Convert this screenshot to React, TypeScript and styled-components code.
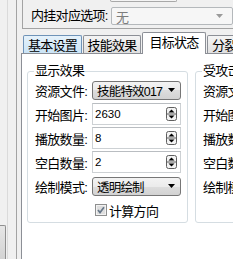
import styled, { createGlobalStyle } from "styled-components";

const FONT = `"Liberation Sans", "Noto Sans CJK SC", sans-serif`;

const GlobalStyle = createGlobalStyle`
  html, body {
    margin: 0;
    padding: 0;
    background: #f0f0f0;
  }
  body {
    font-family: ${FONT};
    font-size: 13px;
    color: #000;
  }
`;

type Field = { label: string; kind: "combo" | "spin"; value: string };

const DISPLAY_FIELDS: Field[] = [
  { label: "资源文件:", kind: "combo", value: "技能特效017" },
  { label: "开始图片:", kind: "spin", value: "2630" },
  { label: "播放数量:", kind: "spin", value: "8" },
  { label: "空白数量:", kind: "spin", value: "2" },
  { label: "绘制模式:", kind: "combo", value: "透明绘制" },
];

const HIT_FIELDS: Field[] = [
  { label: "资源文件:", kind: "combo", value: "技能特效018" },
  { label: "开始图片:", kind: "spin", value: "0" },
  { label: "播放数量:", kind: "spin", value: "0" },
  { label: "空白数量:", kind: "spin", value: "0" },
  { label: "绘制模式:", kind: "combo", value: "透明绘制" },
];

type TabKind = "hover" | "normal" | "active";

const TABS: { title: string; kind: TabKind; width: number }[] = [
  { title: "基本设置", kind: "hover", width: 59 },
  { title: "技能效果", kind: "normal", width: 58 },
  { title: "目标状态", kind: "active", width: 64 },
  { title: "分裂效果", kind: "normal", width: 59 },
];

const Screen = styled.div`
  display: flex;
  width: 233px;
  height: 259px;
  overflow: hidden;
  background: #f0f0f0;
`;

const Gutter = styled.div`
  flex: none;
  display: flex;
  width: 16px;
  border-right: 1px solid #a3a3a3;
`;

const OuterStrip = styled.div`
  flex: none;
  display: flex;
  flex-direction: column;
  justify-content: flex-end;
  width: 7px;
  border-right: 1px solid #dadada;
`;

const ClippedButton = styled.div`
  width: 5px;
  height: 33px;
  background: linear-gradient(#e6e6e6, #d3d3d3);
  border-top: 1px solid #8f8f8f;
  border-right: 1px solid #8f8f8f;
  border-top-right-radius: 2px;
`;

const Main = styled.div`
  flex: none;
  display: flex;
  flex-direction: column;
  width: 380px;
  height: 275px;
  padding-left: 4px;
`;

const TopBox = styled.div`
  flex: none;
  display: flex;
  flex-direction: column;
  height: 28px;
  margin-left: 1px;
  border-left: 1px solid #a3a3a3;
  border-bottom: 1px solid #a3a3a3;
`;

const PrevControl = styled.div`
  width: 67px;
  height: 2px;
  margin-left: 87px;
  box-sizing: border-box;
  border: 1px solid #a8a8a8;
  border-top: none;
  border-radius: 0 0 3px 3px;
  background: #f4f4f4;
`;

const OptionRow = styled.div`
  display: flex;
  align-items: center;
  margin-top: 5px;
  padding-left: 8px;
`;

const CjkText = styled.span`
  letter-spacing: -0.7px;
  white-space: nowrap;
`;

const OptionLabel = styled(CjkText)`
  flex: none;
  width: 80px;
  line-height: 18px;
`;

const DisabledCombo = styled.div`
  flex: none;
  box-sizing: border-box;
  display: flex;
  align-items: center;
  justify-content: space-between;
  width: 122px;
  height: 18px;
  padding: 0 9px 0 4px;
  border: 1px solid #b4b8bb;
  border-radius: 2px;
  background: #f6f6f6;
  color: #7d7d7d;
`;

const TabStrip = styled.div`
  flex: none;
  display: flex;
  align-items: flex-end;
  gap: 1px;
  height: 21px;
  margin-top: 3px;
  margin-left: 2px;
  position: relative;
  z-index: 1;
`;

const Tab = styled.div<{ $kind: TabKind; $width: number }>`
  flex: none;
  box-sizing: border-box;
  width: ${(p) => p.$width}px;
  height: ${(p) => (p.$kind === "active" ? 22 : 18)}px;
  margin-bottom: ${(p) => (p.$kind === "active" ? -1 : 0)}px;
  padding-top: 2px;
  border: 1px solid ${(p) => (p.$kind === "hover" ? "#6f93b8" : "#8c8f96")};
  border-bottom: none;
  border-radius: 2px 2px 0 0;
  text-align: center;
  line-height: 15px;
  overflow: hidden;
  background: ${(p) =>
    p.$kind === "active"
      ? "#ffffff"
      : p.$kind === "hover"
        ? "linear-gradient(#e6f2fb, #d8ebf8 50%, #cbe4f6)"
        : "linear-gradient(#f4f4f4, #ebebeb 50%, #e0e0e0)"};
`;

const TabPanel = styled.div`
  flex: 1;
  display: flex;
  align-items: flex-start;
  gap: 7px;
  padding: 10px 0 0 5px;
  border: 1px solid #8c8f96;
  background: #ffffff;
`;

const Group = styled.fieldset`
  flex: none;
  box-sizing: border-box;
  width: 161px;
  min-width: 0;
  margin: 0;
  padding: 0 6px 0 6px;
  border: 1px solid #d5dde2;
  border-radius: 3px;
`;

const Legend = styled.legend`
  padding: 0 1px;
  line-height: 14px;
  letter-spacing: -0.7px;
  white-space: nowrap;
`;

const Rows = styled.div`
  display: flex;
  flex-direction: column;
`;

const FieldRow = styled.div`
  display: flex;
  align-items: center;
  height: 24px;
  padding-left: 1px;
`;

const FieldLabel = styled(CjkText)`
  flex: none;
  width: 57px;
`;

const Combo = styled.div`
  flex: none;
  box-sizing: border-box;
  display: flex;
  align-items: center;
  justify-content: space-between;
  width: 89px;
  height: 19px;
  padding: 0 5px 0 4px;
  border: 1px solid #767676;
  border-radius: 3px;
  background: linear-gradient(#f3f3f3, #ebebeb 50%, #dddddd 50%, #d2d2d2);
  white-space: nowrap;
`;

const Spin = styled.div`
  flex: none;
  box-sizing: border-box;
  display: flex;
  align-items: center;
  justify-content: space-between;
  width: 89px;
  height: 22px;
  padding: 0 3px 0 2px;
  border: 1px solid #cdd1d4;
  border-top-color: #b9bdc1;
  background: #ffffff;
`;

const NumberText = styled.span`
  font-size: 11.5px;
`;

const ComboText = styled.span`
  font-size: 12.5px;
  letter-spacing: -0.8px;
  white-space: nowrap;
`;

const CheckRow = styled.label`
  display: flex;
  align-items: center;
  gap: 2px;
  height: 24px;
  padding-left: 61px;
`;

function Arrow({ color }: { color: string }) {
  return (
    <svg width="7" height="4" viewBox="0 0 7 4">
      <path d="M0 0 H7 L3.5 4 Z" fill={color} />
    </svg>
  );
}

function Spinner() {
  return (
    <svg width="11" height="14" viewBox="0 0 11 14">
      <rect x="0.5" y="0.5" width="10" height="13" rx="2" fill="#f3f3f3" stroke="#5f5f5f" />
      <line x1="1" y1="7" x2="10" y2="7" stroke="#5f5f5f" />
      <path d="M2.5 5.5 L5.5 2.5 L8.5 5.5 Z" fill="#000" />
      <path d="M2.5 8.5 L5.5 11.5 L8.5 8.5 Z" fill="#000" />
    </svg>
  );
}

function CheckMark() {
  return (
    <svg width="12" height="12" viewBox="0 0 12 12">
      <rect x="0.5" y="0.5" width="11" height="11" fill="#f2f2f2" stroke="#8e8f8f" />
      <rect x="2" y="2" width="8" height="8" fill="#dedede" />
      <path d="M3 6 L5 8.5 L9 3.2" fill="none" stroke="#667789" strokeWidth="1.7" />
    </svg>
  );
}

function FieldGroup({ title, fields }: { title: string; fields: Field[] }) {
  return (
    <Group>
      <Legend>{title}</Legend>
      <Rows>
        {fields.map((f) => (
          <FieldRow key={f.label}>
            <FieldLabel>{f.label}</FieldLabel>
            {f.kind === "combo" ? (
              <Combo>
                <ComboText>{f.value}</ComboText>
                <Arrow color="#000" />
              </Combo>
            ) : (
              <Spin>
                <NumberText>{f.value}</NumberText>
                <Spinner />
              </Spin>
            )}
          </FieldRow>
        ))}
        <CheckRow>
          <CheckMark />
          <CjkText>计算方向</CjkText>
        </CheckRow>
      </Rows>
    </Group>
  );
}

export default function App() {
  return (
    <>
      <GlobalStyle />
      <Screen>
        <Gutter>
          <OuterStrip>
            <ClippedButton />
          </OuterStrip>
        </Gutter>
        <Main>
          <TopBox>
            <PrevControl />
            <OptionRow>
              <OptionLabel>内挂对应选项:</OptionLabel>
              <DisabledCombo>
                <CjkText>无</CjkText>
                <Arrow color="#9a9a9a" />
              </DisabledCombo>
            </OptionRow>
          </TopBox>
          <TabStrip>
            {TABS.map((t) => (
              <Tab key={t.title} $kind={t.kind} $width={t.width}>
                <CjkText>{t.title}</CjkText>
              </Tab>
            ))}
          </TabStrip>
          <TabPanel>
            <FieldGroup title="显示效果" fields={DISPLAY_FIELDS} />
            <FieldGroup title="受攻击效果" fields={HIT_FIELDS} />
          </TabPanel>
        </Main>
      </Screen>
    </>
  );
}
